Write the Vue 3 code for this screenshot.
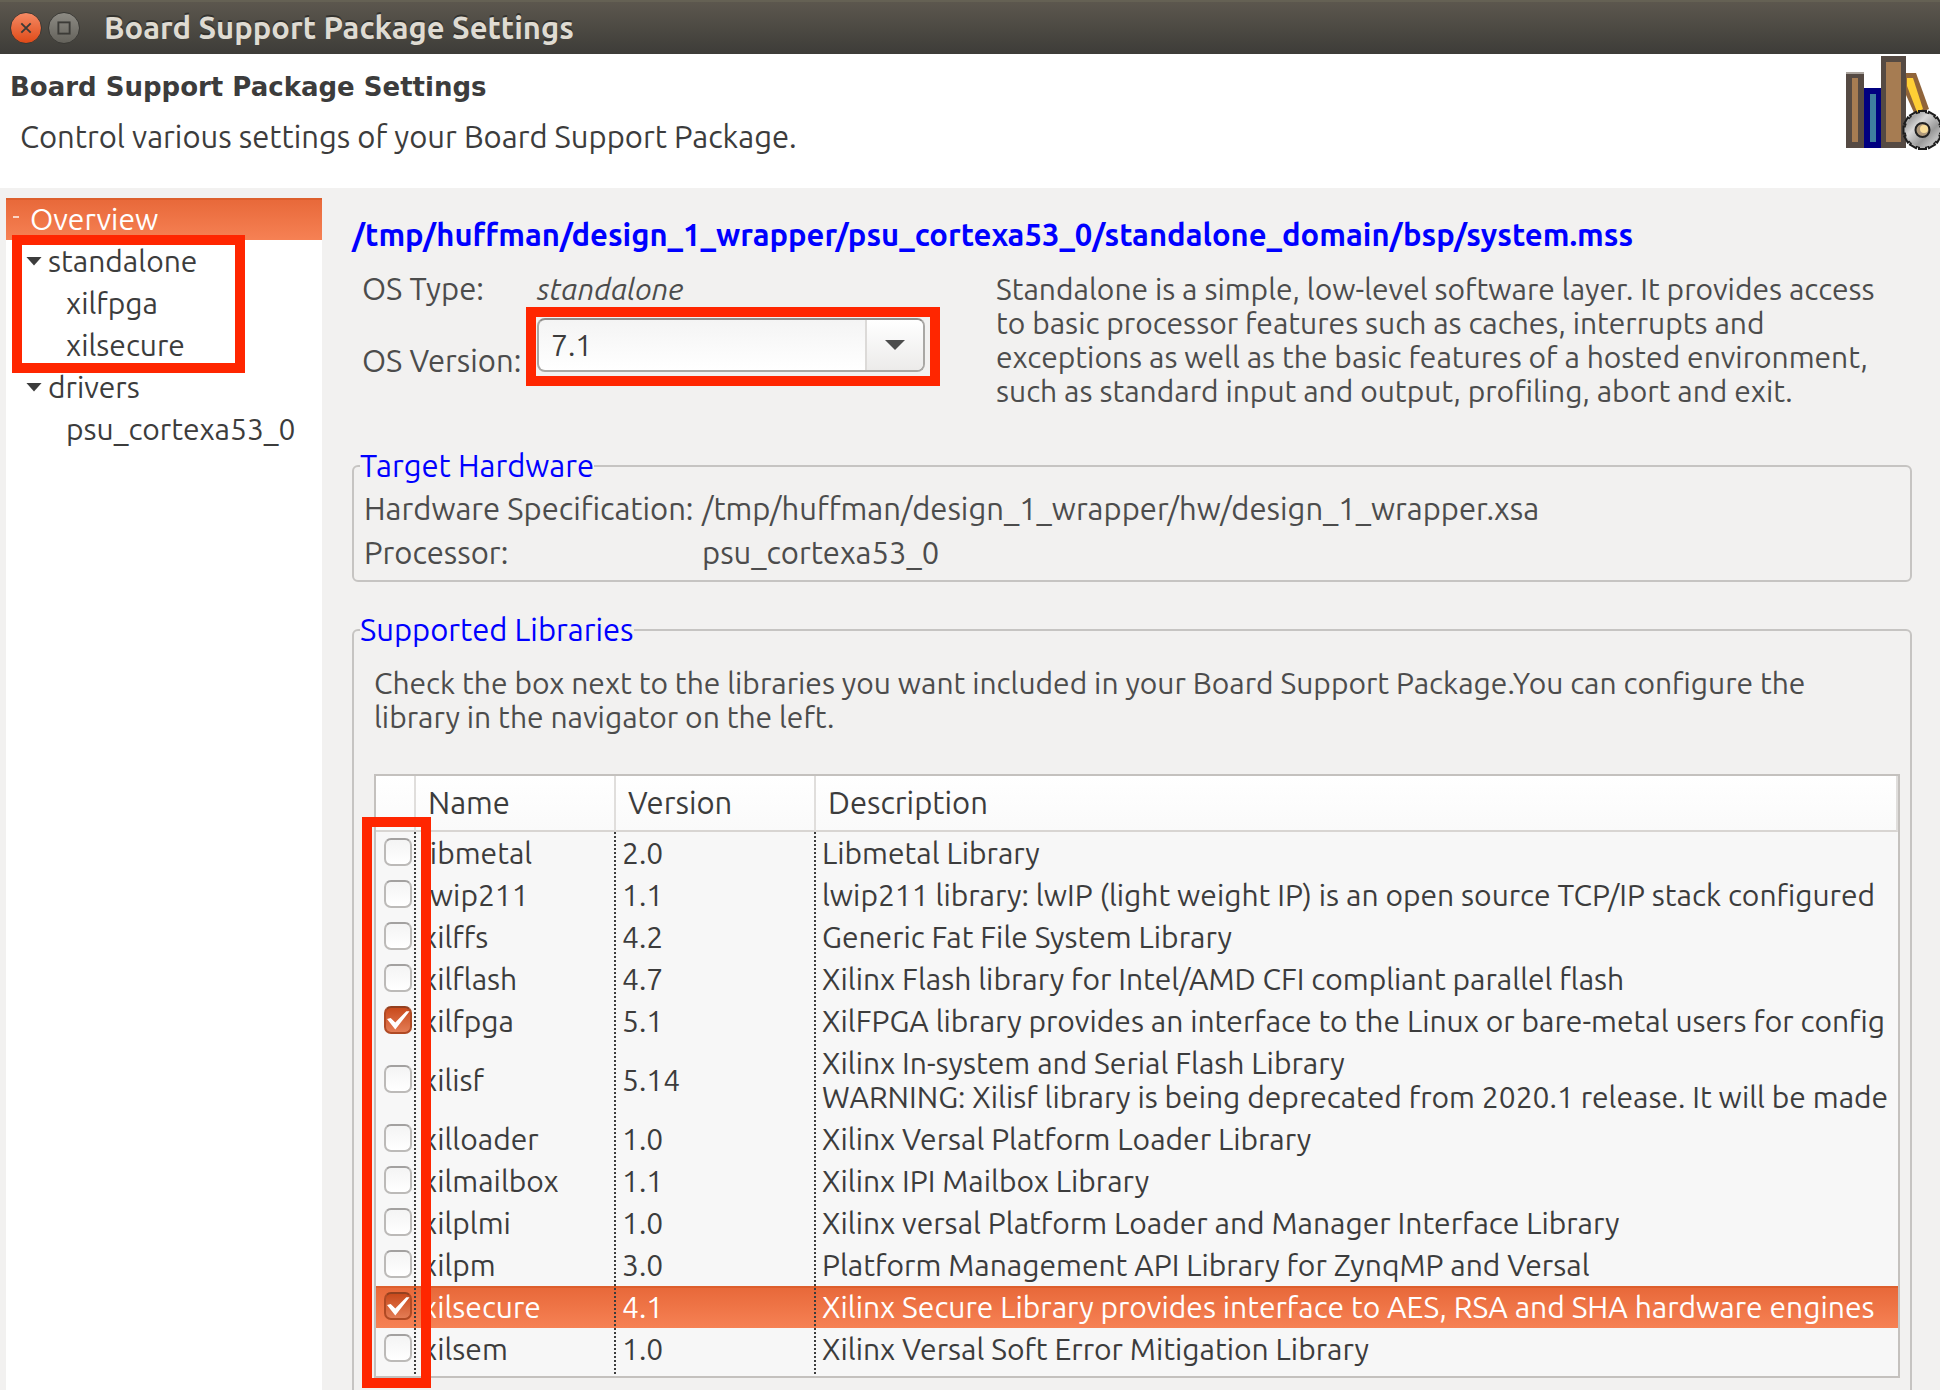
<script setup>
import { ref } from 'vue'

const version = ref('7.1')
const libraries = ref([
  { name: 'libmetal', version: '2.0', lines: ['Libmetal Library'], on: false },
  { name: 'lwip211', version: '1.1', lines: ['lwip211 library: lwIP (light weight IP) is an open source TCP/IP stack configured'], on: false },
  { name: 'xilffs', version: '4.2', lines: ['Generic Fat File System Library'], on: false },
  { name: 'xilflash', version: '4.7', lines: ['Xilinx Flash library for Intel/AMD CFI compliant parallel flash'], on: false },
  { name: 'xilfpga', version: '5.1', lines: ['XilFPGA library provides an interface to the Linux or bare-metal users for config'], on: true },
  { name: 'xilisf', version: '5.14', lines: ['Xilinx In-system and Serial Flash Library', 'WARNING: Xilisf library is being deprecated from 2020.1 release. It will be made'], on: false },
  { name: 'xilloader', version: '1.0', lines: ['Xilinx Versal Platform Loader Library'], on: false },
  { name: 'xilmailbox', version: '1.1', lines: ['Xilinx IPI Mailbox Library'], on: false },
  { name: 'xilplmi', version: '1.0', lines: ['Xilinx versal Platform Loader and Manager Interface Library'], on: false },
  { name: 'xilpm', version: '3.0', lines: ['Platform Management API Library for ZynqMP and Versal'], on: false },
  { name: 'xilsecure', version: '4.1', lines: ['Xilinx Secure Library provides interface to AES, RSA and SHA hardware engines'], on: true, selected: true },
  { name: 'xilsem', version: '1.0', lines: ['Xilinx Versal Soft Error Mitigation Library'], on: false }
])
const teeth = Array.from({ length: 12 }, (_, i) => i * 30)
</script>

<template>
  <div class="window">
    <div class="titlebar">
      <button class="wm close" aria-label="Close">
        <svg viewBox="0 0 32 32"><path d="M11 11 21 21M21 11 11 21" stroke="#3c3b37" stroke-width="2" fill="none" /></svg>
      </button>
      <button class="wm" aria-label="Maximize">
        <svg viewBox="0 0 32 32"><rect x="10" y="10" width="12" height="12" stroke="#3c3b37" stroke-width="2" fill="none" /></svg>
      </button>
      <span class="caption">Board Support Package Settings</span>
    </div>

    <header class="banner">
      <div>
        <h1>Board Support Package Settings</h1>
        <p>Control various settings of your Board Support Package.</p>
      </div>
      <svg class="books" viewBox="0 0 94 94" aria-hidden="true">
        <defs>
          <linearGradient id="steel" x1="0" y1="0" x2="1" y2="1">
            <stop offset="0" stop-color="#777" /><stop offset=".35" stop-color="#d8d8d8" /><stop offset=".65" stop-color="#999" /><stop offset="1" stop-color="#e2e2e2" />
          </linearGradient>
        </defs>
        <rect x="0" y="16" width="18" height="2" fill="#aaa49e" />
        <rect x="0" y="18" width="18" height="74" fill="#554a43" />
        <rect x="6" y="22" width="6" height="64" fill="#a67c52" />
        <rect x="18" y="32" width="17" height="60" fill="#000080" />
        <rect x="24" y="38" width="6" height="48" fill="#3f7f9f" />
        <rect x="35" y="0" width="25" height="92" fill="#554a43" />
        <rect x="40" y="6" width="15" height="80" fill="#a67c52" />
        <path d="M60 17h10l13 36-14 6-9-20z" fill="#90643a" />
        <path d="M61 22h6l10 31-6 3-10-26z" fill="#ffcf35" />
        <g fill="#b4b4b4" stroke="#1c1c1c" stroke-width="2">
          <rect v-for="t in teeth" :key="t" x="73" y="55" width="7" height="8" :transform="`rotate(${t} 76.5 74)`" />
        </g>
        <circle cx="76.5" cy="74" r="17" fill="url(#steel)" />
        <circle cx="76.5" cy="74" r="7" fill="#b09a7c" stroke="#222" stroke-width="2" />
        <circle cx="78" cy="73" r="4" fill="#f8dc98" />
      </svg>
    </header>

    <div class="body">
      <nav class="tree">
        <div class="row current"><i class="dash"></i>Overview</div>
        <div class="marked">
          <div class="row branch"><i class="arrow"></i>standalone</div>
          <div class="row leaf">xilfpga</div>
          <div class="row leaf">xilsecure</div>
        </div>
        <div class="row branch"><i class="arrow"></i>drivers</div>
        <div class="row leaf">psu_cortexa53_0</div>
      </nav>

      <main>
        <h2>/tmp/huffman/design_1_wrapper/psu_cortexa53_0/standalone_domain/bsp/system.mss</h2>

        <div class="os">
          <span class="key">OS Type:</span>
          <em>standalone</em>
          <p class="about">Standalone is a simple, low-level software layer. It provides access to basic processor features such as caches, interrupts and exceptions as well as the basic features of a hosted environment, such as standard input and output, profiling, abort and exit.</p>
          <label class="key" for="os-version">OS Version:</label>
          <div class="combo">
            <select id="os-version" v-model="version"><option>7.1</option></select>
            <span class="drop"><i class="arrow"></i></span>
          </div>
        </div>

        <fieldset class="hardware">
          <legend>Target Hardware</legend>
          <dl>
            <dt>Hardware Specification:</dt><dd>/tmp/huffman/design_1_wrapper/hw/design_1_wrapper.xsa</dd>
            <dt>Processor:</dt><dd>psu_cortexa53_0</dd>
          </dl>
        </fieldset>

        <fieldset class="libs">
          <legend>Supported Libraries</legend>
          <p>Check the box next to the libraries you want included in your Board Support Package.You can configure the library in the navigator on the left.</p>
          <div class="grid">
            <table>
              <colgroup><col class="c-check"><col class="c-mid"><col class="c-mid"><col></colgroup>
              <thead>
                <tr><th></th><th>Name</th><th>Version</th><th>Description</th></tr>
              </thead>
              <tbody>
                <tr v-for="lib in libraries" :key="lib.name" :class="{ selected: lib.selected }">
                  <td class="tick"><input :id="lib.name" v-model="lib.on" type="checkbox"></td>
                  <td><label :for="lib.name">{{ lib.name }}</label></td>
                  <td>{{ lib.version }}</td>
                  <td><div v-for="line in lib.lines" :key="line">{{ line }}</div></td>
                </tr>
              </tbody>
            </table>
            <div class="outline"></div>
          </div>
        </fieldset>
      </main>
    </div>
  </div>
</template>

<style>
body { margin: 0; background: #f2f1f0; }
</style>

<style scoped>
* { box-sizing: border-box; }
.window {
  height: 100vh;
  overflow: hidden;
  display: flex;
  flex-direction: column;
  background: #f2f1f0;
  color: #4c4c4c;
  font: 30px/34px "Ubuntu", "Noto Sans", "Open Sans", sans-serif;
}
h1, h2, p, dl, dd { margin: 0; }

.titlebar {
  flex: none;
  height: 54px;
  padding: 0 10px;
  display: flex;
  align-items: center;
  gap: 6px;
  background: linear-gradient(#5c574e, #3d3c38);
  border-top: 2px solid #656154;
}
.wm {
  width: 32px;
  height: 32px;
  padding: 0;
  border: 1px solid #3a3935;
  border-radius: 50%;
  background: linear-gradient(#8d8b84, #64625b);
}
.wm.close { background: linear-gradient(#f58a64, #df4a18); }
.wm svg { display: block; width: 30px; height: 30px; }
.caption {
  margin-left: 18px;
  color: #dfdbd2;
  font-size: 31px;
  font-weight: 700;
  text-shadow: 0 -2px 0 #33322e;
}

.banner {
  flex: none;
  height: 134px;
  display: flex;
  justify-content: space-between;
  background: #fff;
  color: #3c3c3c;
}
.banner h1 {
  padding: 16px 0 0 10px;
  font: 700 26px/34px "DejaVu Sans", sans-serif;
}
.banner p { padding: 16px 0 0 20px; font-size: 31px; }
.books { width: 94px; height: 94px; margin-top: 2px; }

.body { flex: 1; min-height: 0; display: flex; }
.tree {
  flex: none;
  width: 316px;
  margin: 10px 0 0 6px;
  background: #fff;
  color: #3c3c3c;
}
.row { height: 42px; line-height: 42px; display: flex; align-items: center; }
.current {
  padding-left: 7px;
  gap: 11px;
  color: #fff;
  background: linear-gradient(#dd5f2d 0 2px, #e8693a 2px, #f68154);
}
.dash { width: 6px; height: 2px; margin-bottom: 4px; background: #fbd5c5; }
.branch { padding-left: 20px; gap: 6px; }
.leaf { padding-left: 60px; }
.arrow {
  width: 16px;
  height: 9px;
  background: #3c3c3c;
  clip-path: polygon(0 0, 100% 0, 50% 100%);
}
.marked { position: relative; }
.marked::after {
  content: "";
  position: absolute;
  inset: -5px 77px -7px 6px;
  border: 10px solid #ff2600;
}

main { flex: 1; min-width: 0; padding: 30px 28px 0 30px; }
h2 { color: #0000ff; font-size: 31px; line-height: 34px; white-space: nowrap; }
.os {
  margin-top: 20px;
  padding: 0 10px;
  display: grid;
  grid-template-columns: 175px 459px 1fr;
  grid-template-rows: 34px 91px;
  row-gap: 12px;
}
.key { font-size: 31px; }
.about { grid-area: 1 / 3 / 3 / 4; }
.os label { margin-top: 26px; }
.combo { position: relative; width: 388px; height: 54px; }
.combo::after {
  content: "";
  position: absolute;
  inset: -11px -15px -14px -11px;
  border: 10px solid #ff2600;
  pointer-events: none;
}
.combo select {
  appearance: none;
  width: 100%;
  height: 54px;
  padding: 0 12px;
  border: 2px solid #a9a7a4;
  border-top-color: #8f8d8a;
  border-radius: 8px;
  background: linear-gradient(#f4f4f4, #fff);
  color: #3c3c3c;
  font: inherit;
}
.drop {
  position: absolute;
  inset: 2px 2px 2px auto;
  width: 58px;
  display: grid;
  place-items: center;
  border-left: 2px solid #dcdad8;
  border-radius: 0 6px 6px 0;
  background: linear-gradient(#fff, #ecebea);
  pointer-events: none;
}
.drop .arrow { width: 20px; height: 10px; background: #4c4c4c; }

fieldset { margin: 0; min-width: 0; border: 2px solid #c6c4c2; border-radius: 6px; }
legend { height: 34px; margin-left: 6px; padding: 0; color: #0000ff; font-size: 31px; }
.hardware { margin-top: 40px; padding: 9px 10px 10px 0; }
dl { padding-left: 10px; display: grid; grid-template-columns: 338px 1fr; row-gap: 10px; font-size: 31px; }
.libs { margin-top: 31px; padding: 19px 10px 40px 0; }
.libs p, .grid { margin-left: 20px; }
.libs p { padding-right: 20px; }

.grid {
  position: relative;
  margin-top: 40px;
  padding-bottom: 6px;
  border: 2px solid #c4c1be;
  background: #f7f7f7;
  color: #3c3c3c;
}
.grid::after {
  content: "";
  position: absolute;
  inset: 56px 0 2px 0;
  pointer-events: none;
  background:
    repeating-linear-gradient(#3c3c3c 0 2px, transparent 2px 4px) 38px 0 / 2px 100% no-repeat,
    repeating-linear-gradient(#3c3c3c 0 2px, transparent 2px 4px) 238px 0 / 2px 100% no-repeat,
    repeating-linear-gradient(#3c3c3c 0 2px, transparent 2px 4px) 438px 0 / 2px 100% no-repeat;
}
table { width: 100%; table-layout: fixed; border-collapse: separate; border-spacing: 0; }
.c-check { width: 40px; }
.c-mid { width: 200px; }
th {
  height: 56px;
  padding: 0 12px;
  text-align: left;
  font-size: 31px;
  font-weight: 400;
  background: linear-gradient(#fff, #fafafa);
  border-right: 2px solid #e0dedc;
  border-bottom: 2px solid #d8d5d2;
}
td {
  height: 42px;
  padding: 4px 2px 4px 6px;
  overflow: hidden;
  white-space: nowrap;
}
.tick { padding: 0 0 2px 8px; }
.tick input {
  appearance: none;
  display: block;
  position: relative;
  width: 28px;
  height: 28px;
  margin: 0;
  border: 2px solid #bcbab8;
  border-top-color: #a3a1a0;
  border-radius: 7px;
  background: linear-gradient(#f4f4f4, #fff);
}
.tick input:checked {
  border-color: #b04a24;
  border-top-color: #93401f;
  background: linear-gradient(#c94a1c, #e37c55);
}
.tick input:checked::after {
  content: "";
  position: absolute;
  inset: 2px 0 2px 1px;
  background: #fff;
  clip-path: polygon(0 45%, 16% 40%, 36% 62%, 84% 6%, 98% 6%, 36% 98%);
}
.selected { color: #fff; background: linear-gradient(#dd5f2d 0 2px, #e8693a 2px, #f68154); }
.outline {
  position: absolute;
  inset: 41px auto -12px -14px;
  width: 69px;
  border: 10px solid #ff2600;
  pointer-events: none;
  z-index: 1;
}
</style>
